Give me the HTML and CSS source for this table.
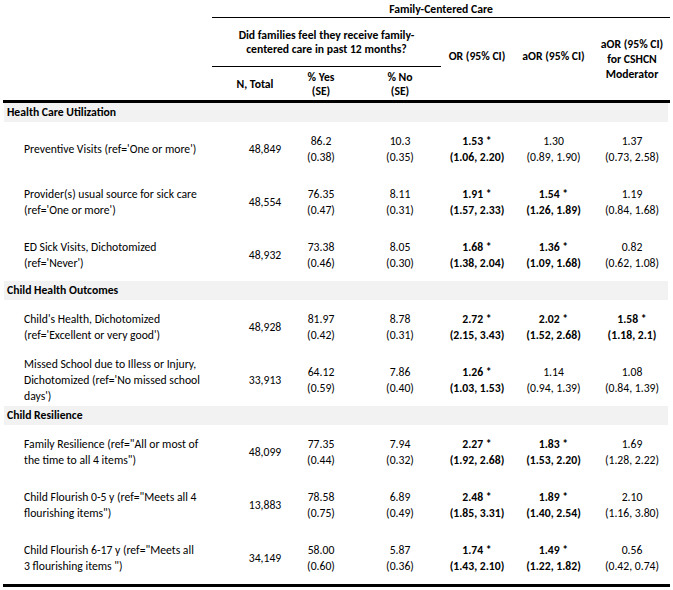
FILE: index.html
```html
<!DOCTYPE html>
<html lang="en">
<head>
<meta charset="utf-8">
<title>Family-Centered Care</title>
<link rel="stylesheet" href="styles.css">
</head>
<body>
<div class="table">
  <div class="thead">
    <div class="h fcc">Family-Centered Care</div>
    <div class="h q">Did families feel they receive family-<br>centered care in past 12 months?</div>
    <div class="h n">N, Total</div>
    <div class="h yes">% Yes<br>(SE)</div>
    <div class="h no">% No<br>(SE)</div>
    <div class="h or">OR (95% CI)</div>
    <div class="h aor">aOR (95% CI)</div>
    <div class="h mod">aOR (95% CI)<br>for CSHCN<br>Moderator</div>
  </div>

  <div class="group-title">Health Care Utilization</div>
  <div class="row">
    <div class="c label">Preventive Visits (ref='One or more')</div>
    <div class="c nval">48,849</div>
    <div class="c">86.2<br>(0.38)</div>
    <div class="c noval">10.3<br>(0.35)</div>
    <div class="c sig">1.53 *<br>(1.06, 2.20)</div>
    <div class="c">1.30<br>(0.89, 1.90)</div>
    <div class="c">1.37<br>(0.73, 2.58)</div>
  </div>
  <div class="row">
    <div class="c label">Provider(s) usual source for sick care<br>(ref='One or more')</div>
    <div class="c nval">48,554</div>
    <div class="c">76.35<br>(0.47)</div>
    <div class="c noval">8.11<br>(0.31)</div>
    <div class="c sig">1.91 *<br>(1.57, 2.33)</div>
    <div class="c sig">1.54 *<br>(1.26, 1.89)</div>
    <div class="c">1.19<br>(0.84, 1.68)</div>
  </div>
  <div class="row">
    <div class="c label">ED Sick Visits, Dichotomized<br>(ref='Never')</div>
    <div class="c nval">48,932</div>
    <div class="c">73.38<br>(0.46)</div>
    <div class="c noval">8.05<br>(0.30)</div>
    <div class="c sig">1.68 *<br>(1.38, 2.04)</div>
    <div class="c sig">1.36 *<br>(1.09, 1.68)</div>
    <div class="c">0.82<br>(0.62, 1.08)</div>
  </div>

  <div class="group-title">Child Health Outcomes</div>
  <div class="row">
    <div class="c label">Child's Health, Dichotomized<br>(ref='Excellent or very good')</div>
    <div class="c nval">48,928</div>
    <div class="c">81.97<br>(0.42)</div>
    <div class="c noval">8.78<br>(0.31)</div>
    <div class="c sig">2.72 *<br>(2.15, 3.43)</div>
    <div class="c sig">2.02 *<br>(1.52, 2.68)</div>
    <div class="c sig">1.58 *<br>(1.18, 2.1)</div>
  </div>
  <div class="row">
    <div class="c label">Missed School due to Illess or Injury,<br>Dichotomized (ref='No missed school<br>days')</div>
    <div class="c nval">33,913</div>
    <div class="c">64.12<br>(0.59)</div>
    <div class="c noval">7.86<br>(0.40)</div>
    <div class="c sig">1.26 *<br>(1.03, 1.53)</div>
    <div class="c">1.14<br>(0.94, 1.39)</div>
    <div class="c">1.08<br>(0.84, 1.39)</div>
  </div>

  <div class="group-title">Child Resilience</div>
  <div class="row">
    <div class="c label">Family Resilience (ref="All or most of<br>the time to all 4 items")</div>
    <div class="c nval">48,099</div>
    <div class="c">77.35<br>(0.44)</div>
    <div class="c noval">7.94<br>(0.32)</div>
    <div class="c sig">2.27 *<br>(1.92, 2.68)</div>
    <div class="c sig">1.83 *<br>(1.53, 2.20)</div>
    <div class="c">1.69<br>(1.28, 2.22)</div>
  </div>
  <div class="row">
    <div class="c label">Child Flourish 0-5 y (ref="Meets all 4<br>flourishing items")</div>
    <div class="c nval">13,883</div>
    <div class="c">78.58<br>(0.75)</div>
    <div class="c noval">6.89<br>(0.49)</div>
    <div class="c sig">2.48 *<br>(1.85, 3.31)</div>
    <div class="c sig">1.89 *<br>(1.40, 2.54)</div>
    <div class="c">2.10<br>(1.16, 3.80)</div>
  </div>
  <div class="row">
    <div class="c label">Child Flourish 6-17 y (ref="Meets all<br>3 flourishing items ")</div>
    <div class="c nval">34,149</div>
    <div class="c">58.00<br>(0.60)</div>
    <div class="c noval">5.87<br>(0.36)</div>
    <div class="c sig">1.74 *<br>(1.43, 2.10)</div>
    <div class="c sig">1.49 *<br>(1.22, 1.82)</div>
    <div class="c">0.56<br>(0.42, 0.74)</div>
  </div>
</div>
</body>
</html>
```
FILE: styles.css
```css
* {
  box-sizing: border-box;
}

body {
  margin: 0;
  background: #ffffff;
  color: #000000;
  font-family: "Carlito", "Liberation Sans", Arial, sans-serif;
  font-size: 11.7px;
}

.table {
  margin-left: 3px;
  width: 667px;
  border-bottom: 3px solid #000000;
}

.thead {
  display: grid;
  grid-template-columns: 209px 86px 46px 97px 72px 81px 76px;
  grid-template-rows: 18px 49px 33px;
  box-sizing: content-box;
  border-bottom: 3px solid #000000;
  font-weight: bold;
  line-height: 14px;
  text-align: center;
}

.h {
  display: flex;
  align-items: center;
  justify-content: center;
}

.fcc {
  grid-column: 2 / 8;
  grid-row: 1;
  border-bottom: 1px solid #000000;
}

.q {
  grid-column: 2 / 5;
  grid-row: 2;
  border-bottom: 1px solid #000000;
}

.n {
  grid-column: 2;
  grid-row: 3;
}

.yes {
  grid-column: 3;
  grid-row: 3;
}

.no {
  grid-column: 4;
  grid-row: 3;
  padding-left: 15px;
}

.or {
  grid-column: 5;
  grid-row: 2 / 4;
  padding-bottom: 6px;
}

.aor {
  grid-column: 6;
  grid-row: 2 / 4;
  padding-bottom: 6px;
}

.mod {
  grid-column: 7;
  grid-row: 2 / 4;
  line-height: 15px;
}

.group-title {
  height: 19px;
  line-height: 19px;
  margin: 0 2px 0 1px;
  padding-left: 3px;
  background: #f2f2f2;
  font-weight: bold;
}

.row {
  display: grid;
  grid-template-columns: 209px 86px 46px 97px 72px 81px 76px;
  height: 53px;
  align-items: center;
  line-height: 16px;
  text-align: center;
}

.label {
  text-align: left;
  padding-left: 21px;
}

.nval {
  padding-left: 20px;
}

.noval {
  padding-left: 15px;
}

.sig {
  font-weight: bold;
}
```
